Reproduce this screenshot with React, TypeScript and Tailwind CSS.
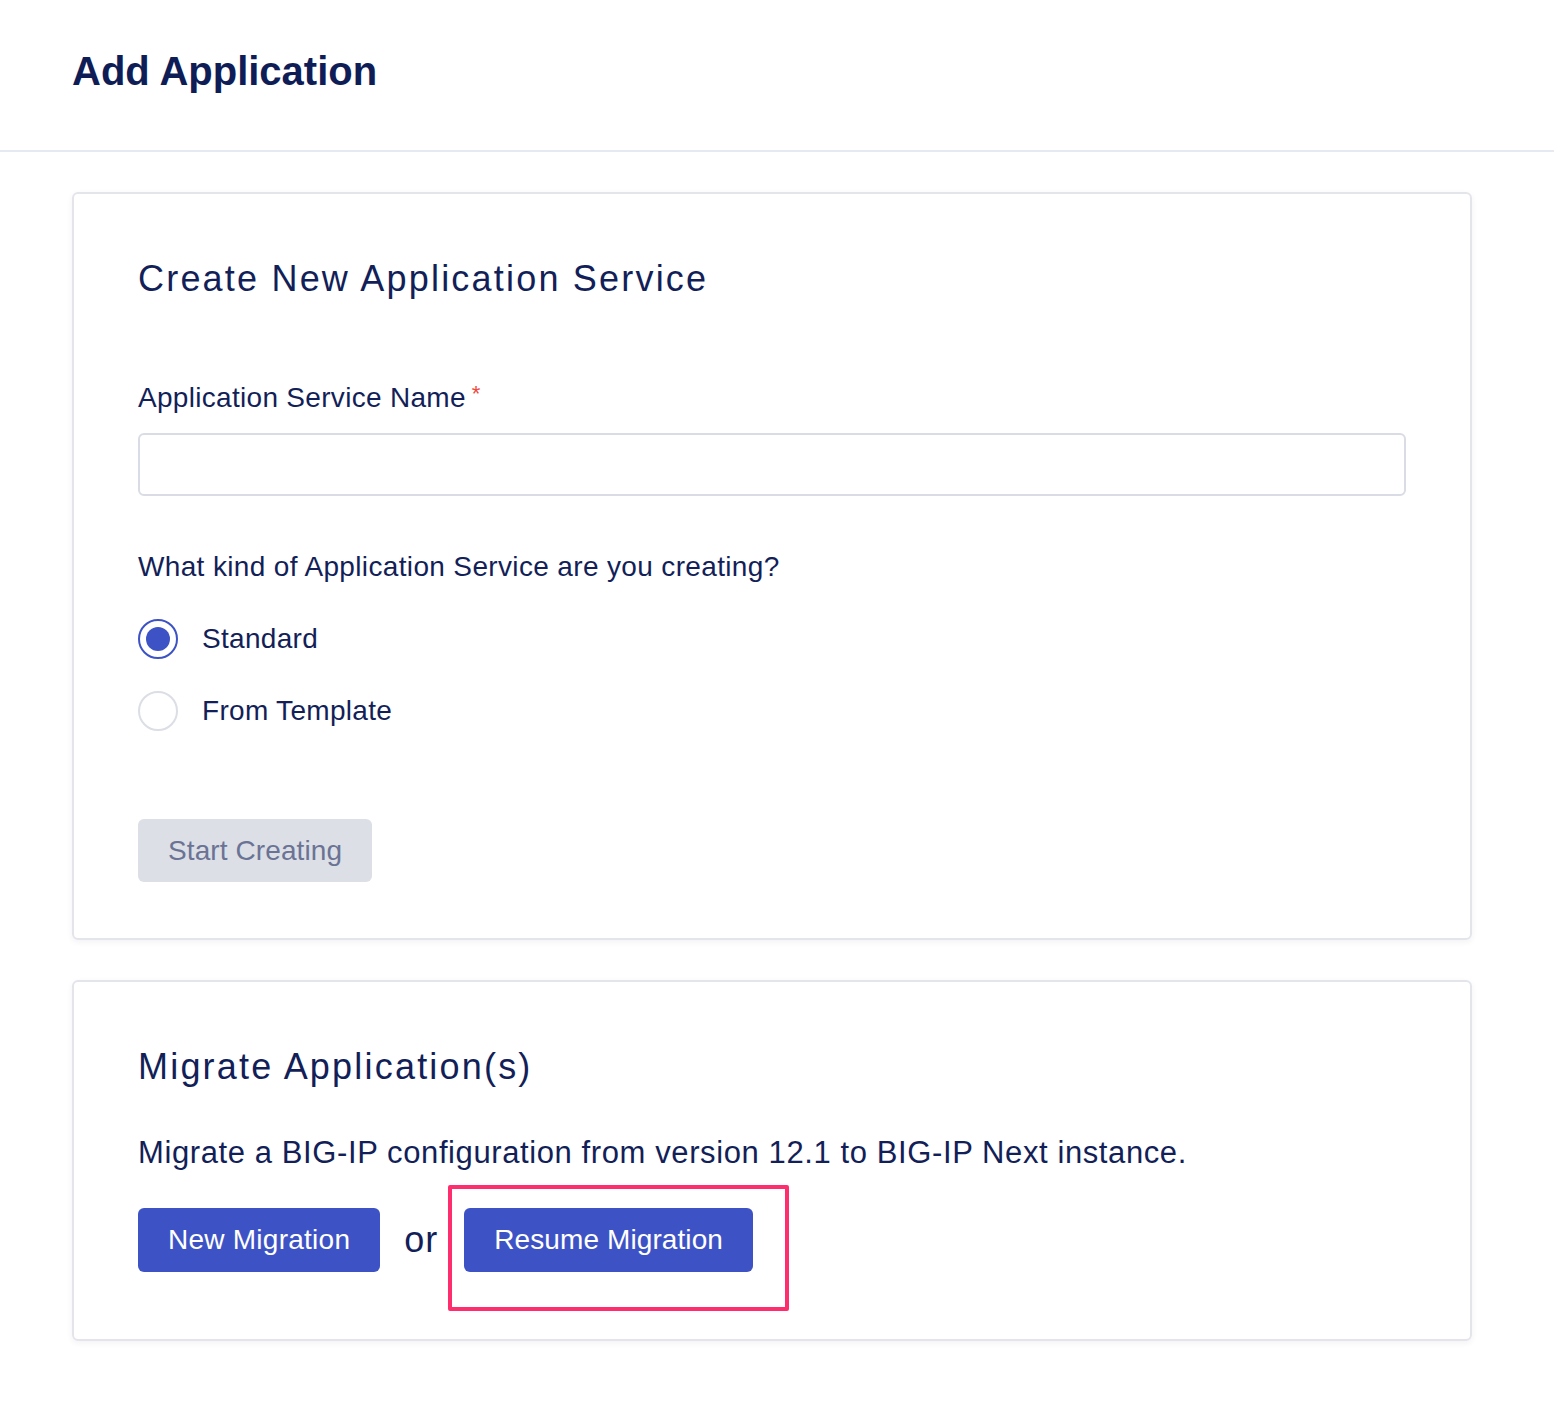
import React from "react";

const Radio: React.FC<{ checked?: boolean; label: string }> = ({ checked, label }) => (
  <label className="flex items-center gap-6">
    <span
      className={
        checked
          ? "flex h-10 w-10 items-center justify-center rounded-full border-2 border-[#3d53c5]"
          : "flex h-10 w-10 items-center justify-center rounded-full border-2 border-[#dcdee5]"
      }
    >
      {checked && <span className="h-[24px] w-[24px] rounded-full bg-[#3d53c5]" />}
    </span>
    <span className="text-[28px] leading-9 tracking-[0.3px]">{label}</span>
  </label>
);

export default function App() {
  return (
    <div className="min-h-screen bg-white font-['Liberation_Sans',Arial,sans-serif] text-[#131f58]">
      <header className="h-[152px] border-b-2 border-[#e7e9f2] px-[72px] pt-[47px]">
        <h1 className="text-[40px] font-bold leading-[48px] text-[#0f1d57]">Add Application</h1>
      </header>

      <main className="flex w-[1472px] flex-col gap-[40px] pl-[72px] pt-10">
        <section className="rounded-md border-2 border-[#e4e5eb] px-[64px] pb-[56px] pt-[65px] shadow-[0_2px_6px_rgba(30,40,90,0.06)]">
          <h2 className="text-[36px] leading-10 tracking-[2.2px]">Create New Application Service</h2>

          <div className="mt-[81px] text-[28px] leading-9 tracking-[0.3px]">
            Application Service Name
            <span className="relative -top-[6px] ml-[6px] text-[22px] text-[#f0483e]">*</span>
          </div>
          <div className="mt-[15px] h-[63px] w-full rounded-md border-2 border-[#d9dce4]" />

          <p className="mt-[53px] text-[28px] leading-9 tracking-[0.35px]">
            What kind of Application Service are you creating?
          </p>

          <div className="mt-[34px] flex flex-col gap-8">
            <Radio checked label="Standard" />
            <Radio label="From Template" />
          </div>

          <button className="mt-[88px] h-[63px] rounded-md bg-[#dcdfe6] px-[30px] text-[28px] tracking-[0.1px] text-[#6b7395]">
            Start Creating
          </button>
        </section>

        <section className="rounded-md border-2 border-[#e4e5eb] px-[64px] pb-[67px] pt-[65px] shadow-[0_2px_6px_rgba(30,40,90,0.06)]">
          <h2 className="text-[36px] leading-10 tracking-[2.2px]">Migrate Application(s)</h2>
          <p className="mt-[46px] text-[31px] leading-10 tracking-[0.6px]">
            Migrate a BIG-IP configuration from version 12.1 to BIG-IP Next instance.
          </p>
          <div className="mt-[35px] flex items-center">
            <button className="h-[64px] rounded-md bg-[#3d53c5] px-[30px] text-[28px] tracking-[0.25px] text-white">
              New Migration
            </button>
            <span className="ml-6 text-[36px] leading-10 tracking-[1px]">or</span>
            <div className="relative ml-[26px]">
              <button className="h-[64px] rounded-md bg-[#3d53c5] px-[30px] text-[28px] tracking-[0.1px] text-white">
                Resume Migration
              </button>
              <span className="pointer-events-none absolute -left-4 -top-[23px] h-[126px] w-[341px] rounded-[2px] border-4 border-[#fe2e6e]" />
            </div>
          </div>
        </section>
      </main>
    </div>
  );
}
